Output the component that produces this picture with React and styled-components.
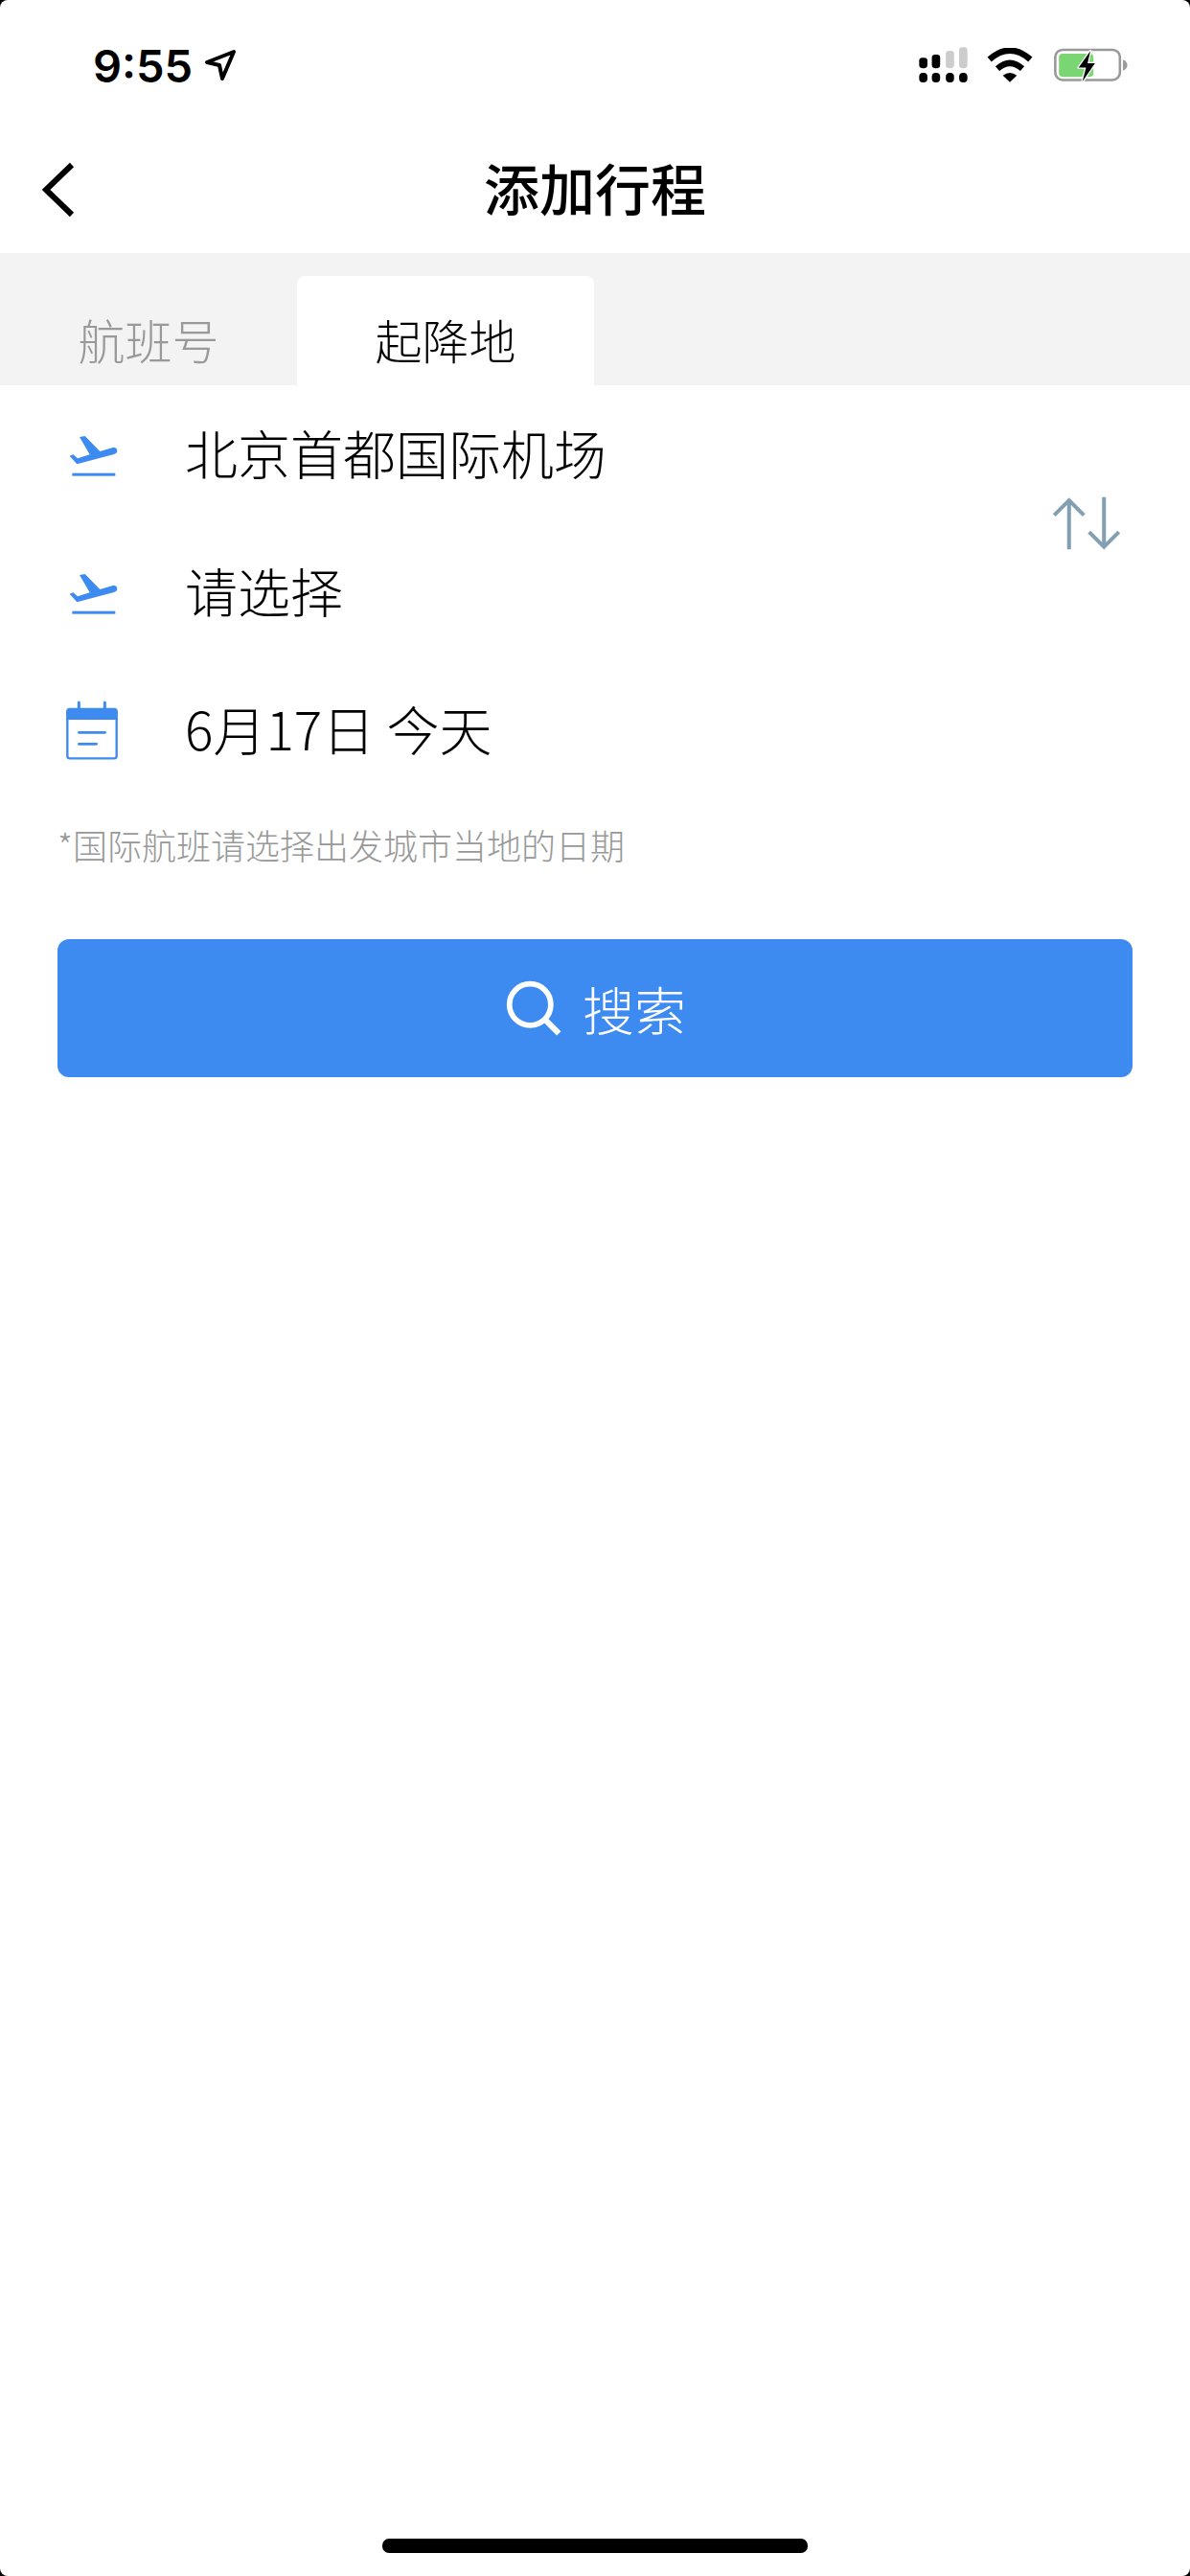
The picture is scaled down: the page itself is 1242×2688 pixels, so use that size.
import React from "react";
import styled, { createGlobalStyle } from "styled-components";

const GlobalStyle = createGlobalStyle`
  html, body {
    margin: 0;
    padding: 0;
    background: #000;
  }
  * {
    box-sizing: border-box;
  }
`;

const cjk = `"Noto Sans CJK SC", "Noto Sans", sans-serif`;

const Page = styled.div`
  width: 1242px;
  height: 2688px;
  display: flex;
  flex-direction: column;
  overflow: hidden;
  border-radius: 8px;
  background: #fff;
  font-family: ${cjk};
`;

const StatusBar = styled.div`
  height: 132px;
  display: flex;
  align-items: center;
  justify-content: space-between;
  padding: 0 64px 0 97px;
  flex-shrink: 0;
`;
const TimeGroup = styled.div`
  display: flex;
  align-items: center;
  gap: 12px;
  margin-top: 4px;
`;
const Time = styled.span`
  font-family: Inter, "Liberation Sans", sans-serif;
  font-size: 47px;
  font-weight: 600;
  line-height: 1;
  color: #000;
`;
const StatusIcons = styled.div`
  display: flex;
  align-items: center;
  gap: 19px;
  margin-top: 4px;
`;

const NavBar = styled.div`
  height: 132px;
  display: flex;
  align-items: center;
  justify-content: center;
  position: relative;
  flex-shrink: 0;
`;
const BackButton = styled.button`
  position: absolute;
  left: 42px;
  top: 36px;
  width: 40px;
  height: 60px;
  padding: 0;
  border: 0;
  background: none;
  display: flex;
`;
const Title = styled.h1`
  margin: 0;
  padding-bottom: 6px;
  font-size: 58px;
  font-weight: 500;
  line-height: 1;
  color: #000;
`;

const TabStrip = styled.div`
  height: 138px;
  padding: 24px 0 0 0;
  display: flex;
  background: #f3f3f3;
  flex-shrink: 0;
`;
const Tab = styled.div`
  width: 310px;
  display: flex;
  align-items: center;
  justify-content: center;
  padding-top: 16px;
  border-radius: 8px 8px 0 0;
  font-size: 49px;
  font-weight: 300;
  line-height: 1;
  background: ${(p) => (p.$active ? "#fff" : "transparent")};
  color: ${(p) => (p.$active ? "#000" : "#999")};
`;

const RouteGroup = styled.div`
  display: flex;
  align-items: center;
  justify-content: space-between;
  padding-right: 72px;
`;
const RouteRows = styled.div`
  display: flex;
  flex-direction: column;
`;
const Row = styled.div`
  height: 144px;
  display: flex;
  align-items: center;
  padding-left: 60px;
`;
const IconSlot = styled.div`
  width: 72px;
  margin-right: 61px;
  display: flex;
  align-items: center;
  justify-content: center;
`;
const RowText = styled.span`
  padding-bottom: 6px;
  font-size: 55px;
  font-weight: 300;
  line-height: 1;
  color: #000;
`;
const Hint = styled.p`
  margin: 22px 0 0 60px;
  font-size: 36px;
  font-weight: 300;
  line-height: 50px;
  color: #999;
`;

const SearchButton = styled.button`
  margin: 74px 60px 0;
  height: 144px;
  border: 0;
  border-radius: 12px;
  background: #3d8bf0;
  color: #fff;
  font-family: inherit;
  font-size: 54px;
  font-weight: 300;
  display: flex;
  align-items: center;
  justify-content: center;
  gap: 22px;
  padding: 0 0 0 2px;
`;

const HomeIndicator = styled.div`
  width: 444px;
  height: 15px;
  margin: auto auto 24px;
  border-radius: 7px;
  background: #000;
`;

const LocationArrow = () => (
  <svg width="34" height="34" viewBox="0 0 34 34" fill="none">
    <path
      d="M3 14 L31 3 L19 31 L16 17 Z"
      stroke="#000"
      strokeWidth="4"
      strokeLinejoin="round"
    />
  </svg>
);

const SignalIcon = () => (
  <svg width="51" height="38" viewBox="180 84 154 113">
    <rect x="181" y="117" width="26" height="33" rx="10" fill="#000" />
    <rect x="221" y="107" width="26" height="43" rx="10" fill="#000" />
    <rect x="265" y="95" width="26" height="55" rx="10" fill="#ccc" />
    <rect x="307" y="84" width="26" height="66" rx="10" fill="#ccc" />
    <rect x="181" y="165" width="26" height="30" rx="12" fill="#000" />
    <rect x="221" y="165" width="26" height="30" rx="12" fill="#000" />
    <rect x="265" y="165" width="26" height="30" rx="12" fill="#000" />
    <rect x="307" y="165" width="26" height="30" rx="12" fill="#000" />
  </svg>
);

const WifiIcon = () => (
  <svg width="50" height="36" viewBox="388 86 150 108" fill="none">
    <path d="M399 122 Q463 66 527 122" stroke="#000" strokeWidth="19" />
    <path d="M424 151 Q463 116 502 151" stroke="#000" strokeWidth="19" />
    <path d="M441 172 Q463 156 485 172 L463 193 Z" fill="#000" />
  </svg>
);

const BatteryIcon = () => (
  <svg width="80" height="36" viewBox="592 86 240 112" fill="none">
    <rect x="598" y="92" width="210" height="98" rx="24" stroke="#999" strokeWidth="8" />
    <rect x="610" y="105" width="112" height="75" rx="12" fill="#7ad673" />
    <path d="M818 124 Q832 130 832 142 Q832 154 818 160 Z" fill="#999" />
    <path
      d="M712 96 L674 150 L698 150 L686 196 L727 136 L703 136 Z"
      fill="#000"
      stroke="#fff"
      strokeWidth="8"
      paintOrder="stroke"
      strokeLinejoin="round"
    />
  </svg>
);

const BackIcon = () => (
  <svg width="40" height="60" viewBox="0 0 40 60" fill="none">
    <path d="M33 4 L6 30 L33 56" stroke="#000" strokeWidth="6" />
  </svg>
);

const TakeoffIcon = () => (
  <svg width="54" height="45" viewBox="86 91 162 135">
    <path
      d="M97 162 L108 158 L122 170 L160 158 L128 103 L145 100 L192 148 L232 136 Q245 134 246 146 Q246 154 236 157 L120 188 Z"
      fill="#3d8bf0"
    />
    <rect x="105" y="216" width="135" height="9" fill="#3d8bf0" />
  </svg>
);

const CalendarIcon = () => (
  <svg width="56" height="62" viewBox="84 60 168 186" fill="none">
    <rect x="91" y="87" width="154" height="154" rx="8" stroke="#3d8bf0" strokeWidth="7" />
    <path d="M88 95 Q88 84 98 84 H238 Q248 84 248 95 V120 H88 Z" fill="#3d8bf0" />
    <path d="M127 66 V86 M208 66 V86" stroke="#3d8bf0" strokeWidth="9" strokeLinecap="round" />
    <path d="M127 160 H209 M127 196 H182" stroke="#3d8bf0" strokeWidth="8" strokeLinecap="round" />
  </svg>
);

const SwapIcon = () => (
  <svg width="72" height="56" viewBox="116 84 212 166" fill="none" stroke="#83a0b3" strokeWidth="12">
    <path d="M168 248 V92 M122 142 L168 96 L214 142" />
    <path d="M276 86 V242 M230 194 L276 240 L322 194" />
  </svg>
);

const SearchIcon = () => (
  <svg width="58" height="58" viewBox="150 195 172 172" fill="none" stroke="#fff" strokeWidth="17">
    <circle cx="225" cy="270" r="64" />
    <path d="M271 316 L314 359" strokeWidth="18" />
  </svg>
);

export default function App() {
  return (
    <>
      <GlobalStyle />
      <Page>
        <StatusBar>
          <TimeGroup>
            <Time>9:55</Time>
            <LocationArrow />
          </TimeGroup>
          <StatusIcons>
            <SignalIcon />
            <WifiIcon />
            <BatteryIcon />
          </StatusIcons>
        </StatusBar>
        <NavBar>
          <BackButton aria-label="返回">
            <BackIcon />
          </BackButton>
          <Title>添加行程</Title>
        </NavBar>
        <TabStrip>
          <Tab>航班号</Tab>
          <Tab $active>起降地</Tab>
        </TabStrip>
        <RouteGroup>
          <RouteRows>
            <Row>
              <IconSlot>
                <TakeoffIcon />
              </IconSlot>
              <RowText>北京首都国际机场</RowText>
            </Row>
            <Row>
              <IconSlot>
                <TakeoffIcon />
              </IconSlot>
              <RowText>请选择</RowText>
            </Row>
          </RouteRows>
          <SwapIcon />
        </RouteGroup>
        <Row>
          <IconSlot>
            <CalendarIcon />
          </IconSlot>
          <RowText>6月17日 今天</RowText>
        </Row>
        <Hint>*国际航班请选择出发城市当地的日期</Hint>
        <SearchButton>
          <SearchIcon />
          搜索
        </SearchButton>
        <HomeIndicator />
      </Page>
    </>
  );
}
